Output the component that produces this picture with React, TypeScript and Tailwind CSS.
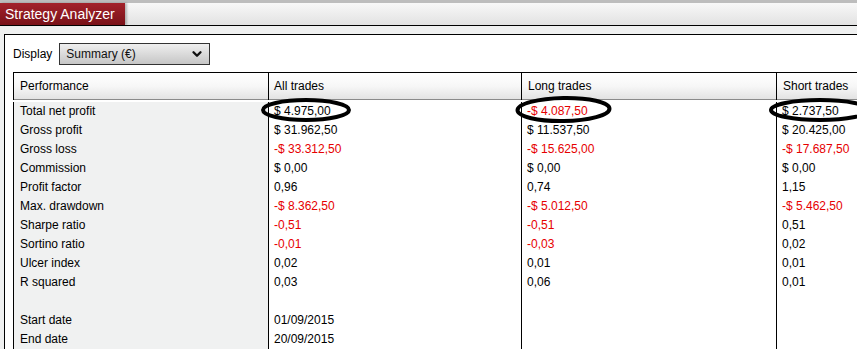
import { ChevronDown } from 'lucide-react';

type Val = { t: string; red?: boolean };

const rows: { label: string; all?: Val; long?: Val; short?: Val }[] = [
  { label: 'Total net profit', all: { t: '$ 4.975,00' }, long: { t: '-$ 4.087,50', red: true }, short: { t: '$ 2.737,50' } },
  { label: 'Gross profit', all: { t: '$ 31.962,50' }, long: { t: '$ 11.537,50' }, short: { t: '$ 20.425,00' } },
  { label: 'Gross loss', all: { t: '-$ 33.312,50', red: true }, long: { t: '-$ 15.625,00', red: true }, short: { t: '-$ 17.687,50', red: true } },
  { label: 'Commission', all: { t: '$ 0,00' }, long: { t: '$ 0,00' }, short: { t: '$ 0,00' } },
  { label: 'Profit factor', all: { t: '0,96' }, long: { t: '0,74' }, short: { t: '1,15' } },
  { label: 'Max. drawdown', all: { t: '-$ 8.362,50', red: true }, long: { t: '-$ 5.012,50', red: true }, short: { t: '-$ 5.462,50', red: true } },
  { label: 'Sharpe ratio', all: { t: '-0,51', red: true }, long: { t: '-0,51', red: true }, short: { t: '0,51' } },
  { label: 'Sortino ratio', all: { t: '-0,01', red: true }, long: { t: '-0,03', red: true }, short: { t: '0,02' } },
  { label: 'Ulcer index', all: { t: '0,02' }, long: { t: '0,01' }, short: { t: '0,01' } },
  { label: 'R squared', all: { t: '0,03' }, long: { t: '0,06' }, short: { t: '0,01' } },
  { label: '' },
  { label: 'Start date', all: { t: '01/09/2015' } },
  { label: 'End date', all: { t: '20/09/2015' } },
];

const cols = 'grid grid-cols-[255px_253px_255px_255px]';

function Cell({ v }: { v?: Val }) {
  return (
    <div className={`border-l border-black pl-[5px] ${v?.red ? 'text-[#e60000]' : 'text-black'}`}>
      {v?.t ?? '\u00a0'}
    </div>
  );
}

export default function App() {
  return (
    <div
      className="relative w-[857px] h-[349px] overflow-hidden bg-[#eff0f0] text-[12px] text-black"
      style={{ fontFamily: '"Liberation Sans", Arial, sans-serif' }}
    >
      <div className="h-[3px] bg-[#bdbdbd]" />
      <div className="flex h-[23px] border-b border-black bg-gradient-to-b from-[#f8f8f8] to-[#e2e2e2]">
        <div className="flex items-center pl-[5px] w-[125px] h-[22px] bg-gradient-to-b from-[#a3222b] to-[#791118] text-white text-[14px] shadow-[2px_0_2px_rgba(0,0,0,0.25)]">
          Strategy Analyzer
        </div>
      </div>
      <div className="h-[8px]" />
      <div className="ml-[4px] h-full border-l border-t border-black bg-white pl-[8px] pt-[8px]">
        <div className="flex items-center gap-[7px] h-[22px]">
          <span>Display</span>
          <div className="flex items-center justify-between w-[151px] h-[22px] border border-[#333] bg-gradient-to-b from-[#efefef] to-[#c6c6c6] pl-[6px] pr-[5px] text-[#111]">
            <span>Summary (€)</span>
            <ChevronDown size={14} strokeWidth={4} />
          </div>
        </div>
        <div className="mt-[7px] border-t border-black w-[1020px]">
          <div className={`${cols} h-[27px] border-b border-[#8a8a8a] bg-gradient-to-b from-white via-[#f7f7f7] to-[#e3e3e3] leading-[27px]`}>
            <div className="border-l border-black pl-[6px]">Performance</div>
            <div className="border-l border-black pl-[5px]">All trades</div>
            <div className="border-l border-black pl-[6px]">Long trades</div>
            <div className="border-l border-black pl-[6px]">Short trades</div>
          </div>
          <div className="pt-[2px]">
            {rows.map((r, i) => (
              <div key={i} className={`${cols} leading-[19px]`}>
                <div className="border-l border-black bg-[#f0f1f1] pl-[6px]">{r.label || '\u00a0'}</div>
                <Cell v={r.all} />
                <Cell v={r.long} />
                <Cell v={r.short} />
              </div>
            ))}
          </div>
        </div>
      </div>
      <svg className="absolute left-0 top-0 pointer-events-none" width="857" height="349" viewBox="0 0 857 349">
        <ellipse cx="306" cy="110" rx="43" ry="10" fill="none" stroke="black" strokeWidth="4" />
        <ellipse cx="563.5" cy="109.5" rx="46" ry="11.5" fill="none" stroke="black" strokeWidth="4" transform="rotate(-1 563.5 109.5)" />
        <ellipse cx="820" cy="110" rx="49" ry="10" fill="none" stroke="black" strokeWidth="4" />
      </svg>
    </div>
  );
}
